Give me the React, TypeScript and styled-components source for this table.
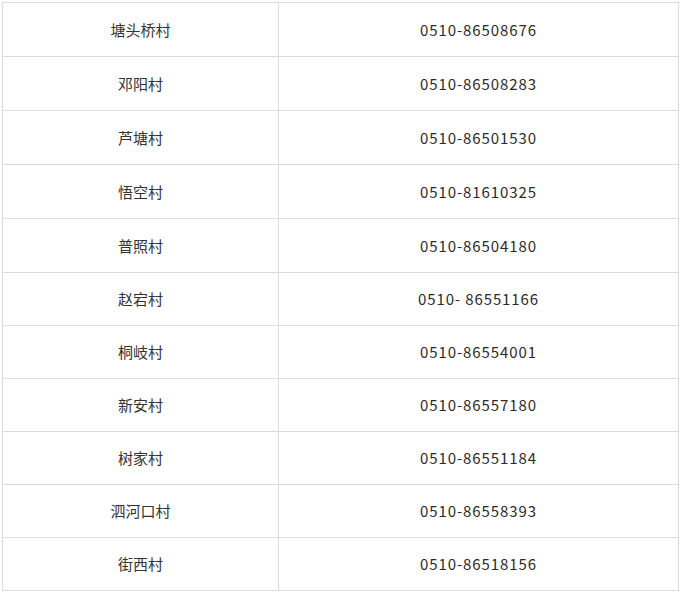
import React from "react";
import styled, { createGlobalStyle } from "styled-components";

const Global = createGlobalStyle`
  html, body { margin: 0; padding: 0; background: #fff; }
  body { font-family: "Noto Sans CJK SC", "Noto Sans", sans-serif; }
`;

const Page = styled.div`
  padding: 2px 0 0 2px;
`;

const Table = styled.div`
  width: 677px;
  display: grid;
  grid-template-columns: 276px 400px;
  border-top: 1px solid #dcdcdc;
  border-left: 1px solid #dcdcdc;
`;

const Cell = styled.div<{ $tall: boolean }>`
  height: ${(p) => (p.$tall ? 52 : 51)}px;
  padding-bottom: 1px;
  display: flex;
  align-items: center;
  justify-content: center;
  border-right: 1px solid #dcdcdc;
  border-bottom: 1px solid #dcdcdc;
  color: #333;
  font-size: 15px;
  box-sizing: content-box;
`;

const Phone = styled.span`
  font-size: 15px;
  letter-spacing: 0.9px;
  color: #2b2b2b;
`;

const rows: [string, string][] = [
  ["塘头桥村", "0510-86508676"],
  ["邓阳村", "0510-86508283"],
  ["芦塘村", "0510-86501530"],
  ["悟空村", "0510-81610325"],
  ["普照村", "0510-86504180"],
  ["赵宕村", "0510- 86551166"],
  ["桐岐村", "0510-86554001"],
  ["新安村", "0510-86557180"],
  ["树家村", "0510-86551184"],
  ["泗河口村", "0510-86558393"],
  ["街西村", "0510-86518156"],
];

export default function App() {
  return (
    <Page>
      <Global />
      <Table>
        {rows.map(([name, phone], i) => (
          <React.Fragment key={name}>
            <Cell $tall={i < 5}>{name}</Cell>
            <Cell $tall={i < 5}>
              <Phone>{phone}</Phone>
            </Cell>
          </React.Fragment>
        ))}
      </Table>
    </Page>
  );
}
